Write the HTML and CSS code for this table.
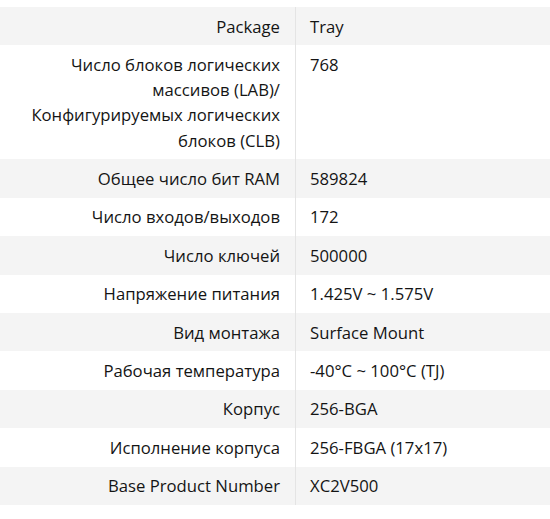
FILE: index.html
```html
<!DOCTYPE html>
<html lang="ru">
<head>
<meta charset="utf-8">
<link rel="stylesheet" href="styles.css">
</head>
<body>
<table class="specs">
  <tbody>
    <tr><th>Package</th><td>Tray</td></tr>
    <tr><th>Число блоков логических<br>массивов (LAB)/<br>Конфигурируемых логических<br>блоков (CLB)</th><td>768</td></tr>
    <tr><th>Общее число бит RAM</th><td>589824</td></tr>
    <tr><th>Число входов/выходов</th><td>172</td></tr>
    <tr><th>Число ключей</th><td>500000</td></tr>
    <tr><th>Напряжение питания</th><td>1.425V ~ 1.575V</td></tr>
    <tr><th>Вид монтажа</th><td>Surface Mount</td></tr>
    <tr><th>Рабочая температура</th><td>-40°C ~ 100°C (TJ)</td></tr>
    <tr><th>Корпус</th><td>256-BGA</td></tr>
    <tr><th>Исполнение корпуса</th><td>256-FBGA (17x17)</td></tr>
    <tr><th>Base Product Number</th><td>XC2V500</td></tr>
  </tbody>
</table>
</body>
</html>
```
FILE: styles.css
```css
html, body {
  margin: 0;
  padding: 0;
  background: #ffffff;
}
body {
  padding-top: 7px;
  font-family: "Open Sans", "Noto Sans", sans-serif;
  font-size: 16.7px;
  line-height: 25.2px;
  color: #141414;
}
.specs {
  width: 100%;
  border-collapse: collapse;
  table-layout: fixed;
}
.specs tr:nth-child(odd) {
  background: #f4f4f4;
}
.specs th {
  width: 280px;
  padding: 6.6px 15px 6.6px 0;
  text-align: right;
  font-weight: normal;
  vertical-align: top;
  border-right: 1px solid #e4e4e4;
}
.specs td {
  padding: 6.6px 13px 6.6px 14px;
  text-align: left;
  vertical-align: top;
}
```
